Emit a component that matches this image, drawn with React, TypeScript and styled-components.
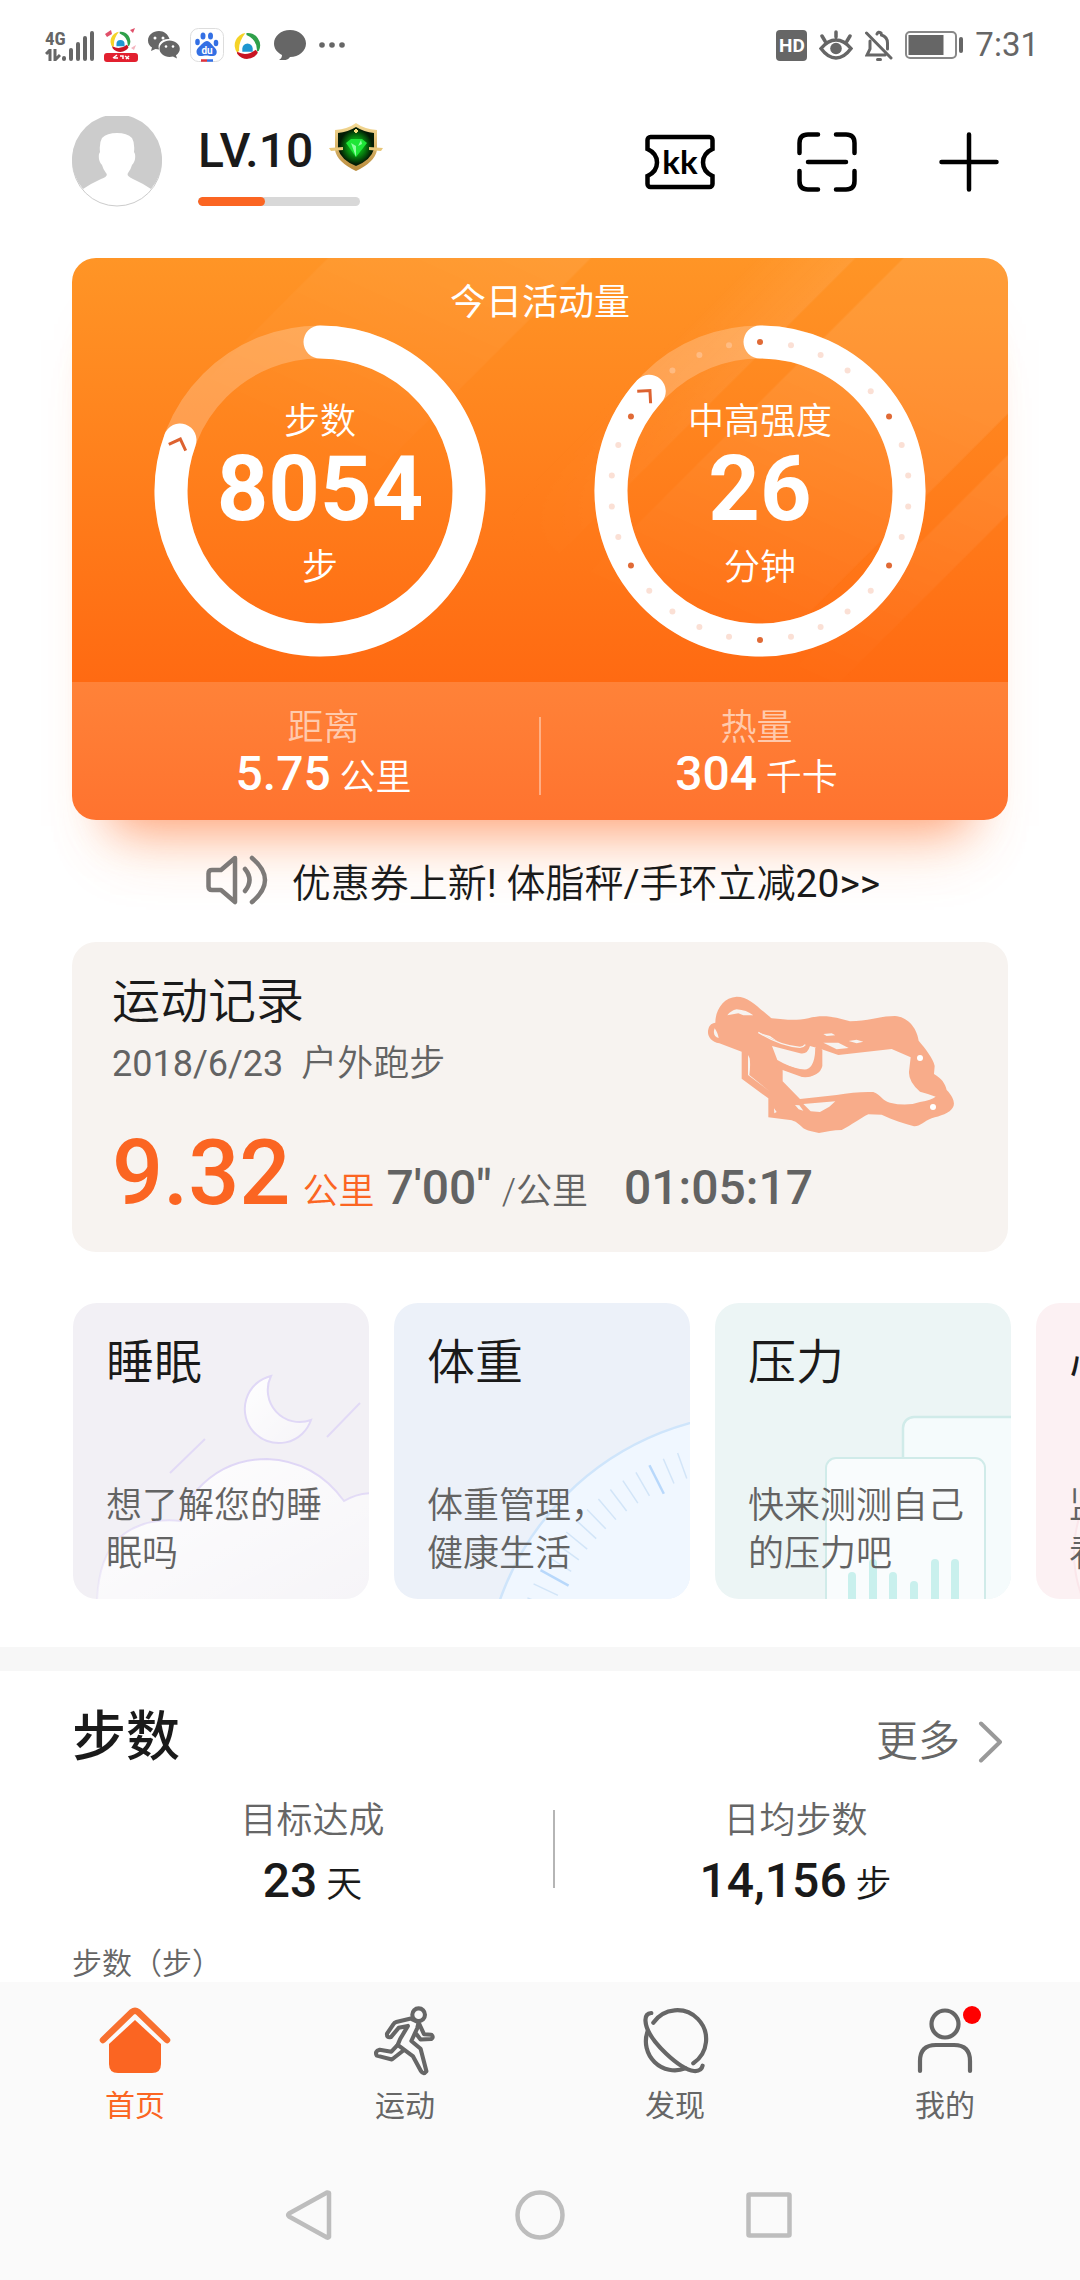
import React from "react";
import styled, { createGlobalStyle } from "styled-components";

const GlobalStyle = createGlobalStyle`
  *, *::before, *::after { box-sizing: border-box; }
  body {
    margin: 0;
    background: #fff;
    color: #1a1a1a;
    font-family: Roboto, "Noto Sans CJK SC", sans-serif;
    font-weight: 350;
  }
  h1, h2, h3, p, dl, dt, dd, ul { margin: 0; padding: 0; font-weight: inherit; }
  ul { list-style: none; }
  button { border: 0; padding: 0; background: none; font: inherit; color: inherit; cursor: pointer; }
  a { color: inherit; text-decoration: none; }
  svg { display: block; }
`;

const Screen = styled.div`
  display: flex;
  flex-direction: column;
  height: 100vh;
`;

const Scroller = styled.main`
  flex: 1;
  min-height: 0;
  overflow-x: hidden;
  overflow-y: auto;
  scrollbar-width: none;
`;

const Latin = styled.span`
  font-weight: 400;
`;

/* ---------- status bar ---------- */

const StatusBar = styled.div`
  display: flex;
  justify-content: space-between;
  align-items: center;
  flex: none;
  height: 90px;
  padding: 0 41px 0 45px;
  color: #666;
`;

const StatusGroup = styled.div<{ $gap: number }>`
  display: flex;
  align-items: center;
  gap: ${(p) => p.$gap}px;
`;

const Signal = styled.div`
  display: flex;
  align-items: flex-end;
`;

const Network = styled.span`
  font-size: 19px;
  line-height: 16px;
  font-weight: 700;
  font-family: "Roboto Condensed", "Liberation Sans Narrow", Roboto, sans-serif;
`;

const NetworkColumn = styled.div`
  display: flex;
  flex-direction: column;
  gap: 2px;
  width: 17px;
`;

const HdBadge = styled.span`
  width: 31px;
  height: 31px;
  border-radius: 4px;
  background: #666;
  color: #fff;
  font-size: 19px;
  font-weight: 700;
  line-height: 32px;
  text-align: center;
`;

const Clock = styled.time`
  font-size: 33px;
  line-height: 40px;
  font-weight: 400;
`;

/* ---------- header ---------- */

const Header = styled.header`
  display: flex;
  align-items: center;
  justify-content: space-between;
  padding: 26px 81px 51px 72px;
`;

const Profile = styled.div`
  display: flex;
  align-items: center;
  gap: 36px;
`;

const Level = styled.div`
  padding-top: 5px;
`;

const LevelRow = styled.div`
  display: flex;
  align-items: center;
  gap: 16px;
  font-size: 48px;
  line-height: 56px;
  font-weight: 500;

  svg { margin-bottom: 8px; }
`;

const LevelTrack = styled.div`
  width: 162px;
  height: 9px;
  margin-top: 18px;
  border-radius: 5px;
  background: #d8d8d8;
  overflow: hidden;
`;

const LevelFill = styled.div`
  height: 100%;
  border-radius: 5px;
  background: #fb6522;
`;

const HeaderActions = styled.div`
  display: flex;
  align-items: center;
  gap: 82px;
  color: #000;
`;

/* ---------- activity card ---------- */

const Gutter = styled.div`
  padding: 0 72px;
`;

const ActivityCard = styled.section`
  border-radius: 24px;
  color: #fff;
  box-shadow: 0 44px 46px -38px rgba(255, 104, 40, 0.55), 0 66px 60px -44px rgba(255, 150, 80, 0.3);
`;

const ActivityTop = styled.div`
  position: relative;
  padding: 23px 28px 25px;
  border-radius: 24px 24px 0 0;
  background: linear-gradient(#ff9526, #ff6a12);

  &::before {
    content: "";
    position: absolute;
    inset: 0;
    border-radius: inherit;
    background: linear-gradient(
      135deg,
      transparent 180px,
      rgba(255, 255, 255, 0.08) 182px 366px,
      transparent 368px 480px,
      rgba(255, 255, 255, 0.08) 553px,
      transparent 555px 587px,
      rgba(255, 255, 255, 0.09) 589px 771px,
      transparent 773px 800px,
      rgba(255, 255, 255, 0.09) 802px 842px,
      transparent 844px
    );
    mask-image: linear-gradient(to bottom left, #000 20%, transparent 62%);
  }
`;

const ActivityTitle = styled.h1`
  position: relative;
  font-size: 36px;
  line-height: 44px;
  font-weight: 400;
  text-align: center;
`;

const Rings = styled.div`
  position: relative;
  display: grid;
  grid-template-columns: 1fr 1fr;
  justify-items: center;
`;

const RingBox = styled.div`
  display: grid;
  place-items: center;

  > * { grid-area: 1 / 1; }
`;

const RingText = styled.div`
  display: flex;
  flex-direction: column;
  align-items: center;
  padding-top: 8px;
  font-size: 36px;
  line-height: 44px;
`;

const RingNumber = styled.strong`
  margin-bottom: 10px;
  font-size: 90px;
  line-height: 92px;
  font-weight: 700;
`;

const ActivityBottom = styled.dl`
  display: flex;
  align-items: center;
  padding: 24px 36px 14px;
  border-radius: 0 0 24px 24px;
  background: linear-gradient(#ff8238, #ff732f);
`;

const Stat = styled.div`
  flex: 1;
  text-align: center;
`;

const Rule = styled.div<{ $color: string }>`
  width: 2px;
  height: 78px;
  background: ${(p) => p.$color};
`;

const TotalLabel = styled.dt`
  font-size: 36px;
  line-height: 44px;
  color: rgba(255, 255, 255, 0.6);
`;

const TotalValue = styled.dd`
  font-size: 36px;
  line-height: 56px;
`;

const Figure = styled.strong`
  font-size: 48px;
  line-height: 0;
  font-weight: 500;
`;

/* ---------- notice ---------- */

const Notice = styled.a`
  position: relative;
  display: flex;
  align-items: center;
  justify-content: center;
  gap: 24px;
  height: 122px;
  padding: 0 0 2px 6px;
  font-size: 39px;
`;

/* ---------- workout record ---------- */

const Record = styled.section`
  position: relative;
  padding: 30px 40px 32px;
  border-radius: 24px;
  background: #f7f3f0;
  color: #636363;
`;

const RecordTitle = styled.h2`
  font-size: 48px;
  line-height: 60px;
  color: #1a1a1a;
`;

const RecordMeta = styled.p`
  margin-top: 8px;
  font-size: 36px;
  line-height: 48px;
  white-space: pre;
`;

const RecordStats = styled.p`
  display: flex;
  align-items: baseline;
  margin-top: 40px;
  font-size: 36px;
  line-height: 40px;
  white-space: nowrap;
`;

const Distance = styled.strong`
  margin-right: 12px;
  font-size: 90px;
  line-height: 92px;
  font-weight: 500;
  color: #fb6522;
`;

const DistanceUnit = styled.span`
  margin-right: 12px;
  color: #fb6522;
`;

const Pace = styled(Figure)`
  margin-right: 10px;
`;

const Duration = styled(Figure)`
  margin-left: 36px;
`;

const Route = styled.svg`
  position: absolute;
  top: 38px;
  right: 38px;
`;

/* ---------- health tiles ---------- */

const Tiles = styled.ul`
  display: flex;
  gap: 25px;
  margin: 51px 0 48px;
  padding-left: 73px;
  overflow: hidden;
`;

const Tile = styled.li<{ $bg: string }>`
  position: relative;
  flex: none;
  width: 296px;
  height: 296px;
  padding: 30px 33px;
  border-radius: 24px;
  background: ${(p) => p.$bg};
  overflow: hidden;
`;

const TileArt = styled.svg`
  position: absolute;
  inset: 0;
`;

const TileTitle = styled.h3`
  position: relative;
  font-size: 48px;
  line-height: 60px;
`;

const TileText = styled.p`
  position: relative;
  margin-top: 89px;
  font-size: 36px;
  line-height: 48px;
  color: #636363;
  white-space: pre-line;
`;

/* ---------- steps ---------- */

const Steps = styled.section`
  padding: 31px 0 0;
  border-top: 24px solid #f7f7f7;
`;

const StepsHead = styled.div`
  display: flex;
  align-items: center;
  justify-content: space-between;
  padding: 0 76px 0 72px;
`;

const StepsTitle = styled.h2`
  font-size: 54px;
  line-height: 72px;
  font-weight: 500;
`;

const More = styled.a`
  display: flex;
  align-items: center;
  gap: 18px;
  margin-top: 8px;
  font-size: 42px;
  line-height: 56px;
  color: #666;
`;

const StepsStats = styled.dl`
  display: flex;
  align-items: center;
  margin: 21px 44px 0 72px;
`;

const StepsLabel = styled.dt`
  font-size: 36px;
  line-height: 52px;
  color: #666;
`;

const StepsValue = styled.dd`
  margin-top: 20px;
  font-size: 36px;
  line-height: 36px;
`;

const ChartCaption = styled.p`
  margin-top: 43px;
  padding-left: 72px;
  font-size: 30px;
  line-height: 36px;
  color: #666;
`;

/* ---------- bottom navigation ---------- */

const Bottom = styled.footer`
  flex: none;
  background: #fafafa;
`;

const Tabs = styled.nav`
  display: grid;
  grid-template-columns: repeat(4, 1fr);
  height: 168px;
  padding-top: 22px;
`;

const Tab = styled.a<{ $active?: boolean }>`
  display: flex;
  flex-direction: column;
  align-items: center;
  gap: 10px;
  font-size: 30px;
  line-height: 36px;
  font-weight: 400;
  color: ${(p) => (p.$active ? "#fb6522" : "#666")};
`;

const TabIcon = styled.span`
  position: relative;
`;

const Dot = styled.span`
  position: absolute;
  top: 2px;
  right: 0;
  width: 18px;
  height: 18px;
  border-radius: 50%;
  background: #f00;
`;

const SystemBar = styled.div`
  display: flex;
  align-items: center;
  justify-content: center;
  gap: 180px;
  height: 130px;
`;

/* ---------- rings ---------- */

const RING = 332;
const RADIUS = 149;

const at = (deg: number, r = RADIUS) => {
  const a = ((deg - 90) * Math.PI) / 180;
  return [RING / 2 + r * Math.cos(a), RING / 2 + r * Math.sin(a)];
};

function Ring({ degrees, dotted }: { degrees: number; dotted?: boolean }) {
  const [x, y] = at(degrees);
  const [sx, sy] = at(0);
  const dots = dotted ? Array.from({ length: 30 }, (_, i) => i).filter((i) => i * 12 !== degrees) : [];
  return (
    <svg width={RING} height={RING} fill="none" aria-hidden="true">
      <circle cx={RING / 2} cy={RING / 2} r={RADIUS} stroke="#fff" strokeOpacity=".22" strokeWidth="33" />
      <path
        d={`M${sx} ${sy}A${RADIUS} ${RADIUS} 0 1 1 ${x} ${y}`}
        stroke="#fff"
        strokeWidth="33"
        strokeLinecap="round"
      />
      {dots.map((i) => {
        const [cx, cy] = at(i * 12);
        const major = i % 5 === 0;
        const empty = i * 12 > degrees;
        return (
          <circle
            key={i}
            cx={cx}
            cy={cy}
            r="3"
            fill={major ? "#e06a36" : empty ? "#ffc9a0" : "#fbe0d5"}
            fillOpacity={empty ? 0.6 : 1}
          />
        );
      })}
      <path d="M-9 8L0 -1L9 8" transform={`translate(${x} ${y}) rotate(${degrees + 90})`} stroke="#dd6230" strokeWidth="3" />
    </svg>
  );
}

/* ---------- drawings ---------- */

const SwirlLogo = ({ size, x, y }: { size: number; x?: number; y?: number }) => (
  <svg x={x} y={y} width={size} height={size} viewBox="0 0 26 26" fill="none">
    <path d="M3 20A12 12 0 0 1 11 1Q4 10 5 18Z" fill="#f5d327" />
    <path d="M12 1A12 12 0 0 1 24 18L22 19Q23 8 12 3Z" fill="#2fa04a" />
    <path d="M3 19Q12 24 21 17L23 20A12 12 0 0 1 3 21Z" fill="#c81422" />
    <path d="M8 19V16A5 5 0 1 1 18 16V19Z" fill="#1e96d0" />
  </svg>
);

function SignalIcon() {
  return (
    <svg width="32" height="31" fill="none" stroke="#666" strokeWidth="4" strokeLinecap="round">
      <path d="M2 28v1M9 20v9M16 14v15M23 8v21M30 3v26" />
    </svg>
  );
}

function PromoIcon() {
  return (
    <svg width="34" height="34" viewBox="0 0 34 34">
      <path d="M1 6l6-4 1 4-5 3zM26 2l5-2-2 5z" fill="#e0506a" />
      <path d="M27 20l5-3-2 5z" fill="#f3b4be" />
      <SwirlLogo size={21} x={6} y={3} />
      <rect y="25" width="34" height="9" rx="3" fill="#e2202f" />
      <path d="M9 30l4-3M10 30h4M16 28h3v3M21 28l4 3M25 28l-3 3" stroke="#fff" strokeWidth="1.5" fill="none" />
    </svg>
  );
}

function WechatIcon() {
  return (
    <svg width="32" height="28" viewBox="0 0 32 28" fill="#666">
      <path d="M11 0C5 0 0 4 0 9.500c0 3 1.500 5.500 4 7L3 20l4.500-2 3.500.5C9 12 14 7.500 21.500 8 20 3 16 0 11 0z" />
      <path d="M21.500 9.500c-5.500 0-10 3.700-10 8.300s4.500 8.200 10 8.200l3.500-.5 4 2-1-3.300c2.400-1.500 3.800-3.800 3.800-6.400 0-4.600-4.800-8.300-10.300-8.300z" />
      <g fill="#fff">
        <circle cx="7" cy="7" r="1.500" /><circle cx="15" cy="7" r="1.500" />
        <circle cx="18" cy="15.500" r="1.300" /><circle cx="25" cy="15.500" r="1.300" />
      </g>
    </svg>
  );
}

function PawIcon() {
  return (
    <svg width="34" height="34" viewBox="0 0 34 34">
      <rect x=".5" y=".5" width="33" height="33" rx="8" fill="#fff" stroke="#ddd" />
      <g fill="#3470e4">
        <ellipse cx="13" cy="8" rx="2.500" ry="3.500" /><ellipse cx="20.500" cy="8" rx="2.500" ry="3.500" />
        <ellipse cx="7.500" cy="14" rx="2.300" ry="3.200" /><ellipse cx="26" cy="15" rx="2.300" ry="3.200" />
        <path d="M17 13c3 0 5 4 8 7s2 8-2 8-4-.6-6.500-.6S13 28 10 28s-5-5-2-8 6-7 9-7z" />
      </g>
      <text x="17" y="26" fontSize="10" fontWeight="700" fontFamily="Roboto" fill="#fff" textAnchor="middle">du</text>
      <path d="M11 32.500h6" stroke="#e0323c" strokeWidth="2.500" />
      <path d="M17 32.500h6" stroke="#3470e4" strokeWidth="2.500" />
    </svg>
  );
}

function BubbleIcon() {
  return (
    <svg width="32" height="30" viewBox="0 0 32 30" fill="#666">
      <path d="M16 0c9 0 16 6 16 13.500S25 27 16 27c-2 3-6 4-11 3 2-1 3-3 3-5C3 22.500 0 18.500 0 13.500 0 6 7 0 16 0z" />
    </svg>
  );
}

function MoreDots() {
  return (
    <svg width="26" height="6" fill="#666">
      <circle cx="3" cy="3" r="2.800" /><circle cx="13" cy="3" r="2.800" /><circle cx="23" cy="3" r="2.800" />
    </svg>
  );
}

function EyeIcon() {
  return (
    <svg width="34" height="30" viewBox="0 0 34 30" fill="none" stroke="#666" strokeWidth="3.500" strokeLinecap="round">
      <path d="M2 18.500Q9 10 17 10t15 8.500Q25 28 17 28T2 18.500zM17 2v5M3 6l3 5M31 6L28 11" />
      <circle cx="17" cy="18.500" r="5.800" fill="#666" stroke="none" />
    </svg>
  );
}

function BellOffIcon() {
  return (
    <svg width="28" height="31" viewBox="0 0 28 31" fill="none" stroke="#666" strokeWidth="3" strokeLinecap="round">
      <path d="M1.500 3L26 28M5 11v8l-3 6h18M12 4q1-3 4-1l.5 2q6 2 6 8v6" />
      <path d="M12.500 29.500h3" />
    </svg>
  );
}

function BatteryIcon() {
  return (
    <svg width="58" height="28" viewBox="0 0 58 28" fill="none">
      <rect x="1" y="1" width="50" height="26" rx="4" stroke="#888" strokeWidth="2" />
      <rect x="3.500" y="4" width="35" height="20" fill="#666" />
      <rect x="54" y="6" width="4" height="16" rx="2" fill="#666" />
    </svg>
  );
}

function AvatarArt() {
  return (
    <svg width="90" height="91" viewBox="0 0 90 91" role="img" aria-label="头像">
      <circle cx="45" cy="45.500" r="44.500" fill="#fff" stroke="#ccc" />
      <path
        fill="#ccc"
        d="M11 73A45 45 0 1 1 79 73Q70 67 61 63Q54 60 56 57Q59 53 60 49Q64 45 63 38L62 36Q63 27 60 22Q55 17 45 17T30 22Q27 27 28 36L27 38Q26 45 30 49Q31 53 34 57Q37 60 29 63Q20 67 11 73Z"
      />
    </svg>
  );
}

function ShieldArt() {
  return (
    <svg width="54" height="48" viewBox="0 0 54 48" aria-hidden="true">
      <defs>
        <radialGradient id="glow">
          <stop offset="0" stopColor="#16e02a" />
          <stop offset=".5" stopColor="#06840f" />
          <stop offset=".9" stopColor="#031c04" />
        </radialGradient>
        <linearGradient id="gold" x2="0" y2="1">
          <stop stopColor="#f6dc98" />
          <stop offset="1" stopColor="#b98a3a" />
        </linearGradient>
      </defs>
      <path d="M27 0Q35 6 48 7V27Q46 39 27 48Q8 39 6 27V7Q19 6 27 0Z" fill="url(#gold)" />
      <path d="M27 4Q35 9 45 10V26Q42 37 27 43Q12 37 9 26V10Q19 9 27 4Z" fill="url(#glow)" />
      <path d="M0 25l14-1v3l-12 1zM54 25l-14-1v3l12 1z" fill="#e8c77a" />
      <path d="M17 20l5-4h11l5 4-11 14z" fill="#1ee637" />
      <path d="M22 20l5 3v11zM32 17l1 4-4 2z" fill="#8dffa0" />
      <path d="M25 8h4M27 6v4" stroke="#f2dd7c" strokeWidth="2" />
    </svg>
  );
}

function TicketIcon() {
  return (
    <svg width="70" height="56" viewBox="0 0 70 56" fill="none" stroke="#000" strokeWidth="4.500">
      <path d="M2.500 15V6a3 3 0 0 1 3-3H64.500a3 3 0 0 1 3 3V15C61 18 58 23 58 28.500S61 39 67.500 42V50a3 3 0 0 1-3 3H5.500a3 3 0 0 1-3-3V42C9 39 12 34 12 28.500S9 18 2.500 15Z" />
      <text x="35" y="40" fontSize="33" fontWeight="700" fontFamily="Lato, sans-serif" textAnchor="middle" fill="#000" stroke="none">kk</text>
    </svg>
  );
}

function ScanIcon() {
  return (
    <svg width="60" height="60" viewBox="0 0 60 60" fill="none" stroke="#000" strokeWidth="4.500" strokeLinecap="round">
      <path d="M2.500 21V11Q2.500 2.500 11 2.500H21M39 2.500H49Q57.500 2.500 57.500 11V21M57.500 39V49Q57.500 57.500 49 57.500H39M21 57.500H11Q2.500 57.500 2.500 49V39M11 30H49" />
    </svg>
  );
}

function PlusIcon() {
  return (
    <svg width="60" height="60" viewBox="0 0 60 60" fill="none" stroke="#000" strokeWidth="4.500" strokeLinecap="round">
      <path d="M30 2.500V57.500M2.500 30H57.500" />
    </svg>
  );
}

function SpeakerIcon() {
  return (
    <svg width="62" height="50" viewBox="0 0 62 50" fill="none" stroke="#7d7a78" strokeWidth="4.500" strokeLinecap="round" strokeLinejoin="round">
      <path d="M29 3L15 15H6Q2.500 15 2.500 18.500V31.500Q2.500 35 6 35H15L29 47Z" />
      <path d="M39 14Q48 25 39 36M46 3Q72 25 46 47" />
    </svg>
  );
}

function RouteArt() {
  return (
    <Route width="280" height="170" viewBox="0 0 840 510" aria-hidden="true">
      <path
        fill="#f8ac8a"
        fillRule="evenodd"
        d="M76 128C76 90 100 52 140 50C180 50 205 85 245 115C290 120 320 122 355 115C400 102 440 112 480 124C530 124 570 108 615 108C650 110 680 140 686 182C705 205 730 235 734 258L732 282C755 295 765 310 770 330C790 350 796 370 789 382C780 400 750 408 725 415C700 425 690 440 672 439C640 430 610 420 575 404L535 403C510 415 485 435 455 450C430 450 410 455 387 459C370 455 350 452 340 445C325 430 315 422 300 420L235 412V355L155 296V215L88 190C62 186 50 165 55 148C58 132 68 130 76 128Z
          M74 145C68 160 74 172 86 174C84 162 80 154 74 145Z
          M112 106L145 100L160 106L190 106Q170 90 140 88Q122 92 112 106Z
          M174 225V285L240 335L178 285Q182 255 179 235Z
          M246 198L262 240L280 250Q320 270 350 268Q376 258 376 200L397 210V258Q390 290 340 290L278 268V304L330 357L440 345Q500 334 550 336C575 345 575 362 600 368Q650 380 690 366Q725 360 737 350Q710 340 690 335Q655 305 657 275L662 232L605 207L445 225L395 208L360 198Q352 225 330 220Z
          M400 188L445 188L476 204L440 208Z
          M476 183L500 179L520 185L500 190Z
          M400 162L425 160L436 166L410 168Z
          M340 372L436 364L418 380L390 396L362 394Z
          M315 375L328 376L340 392L326 388Z
          M252 385L260 396L253 400Z"
      />
      <path d="M386 196V250Q375 286 338 282L262 255" fill="none" stroke="#f8ac8a" strokeWidth="18" />
      <path d="M205 157Q270 198 330 202Q340 202 346 194" fill="none" stroke="#f7f3f0" strokeWidth="4" />
      <path d="M206 158L240 168L262 184Z" fill="#f7f3f0" />
      <circle cx="690" cy="234" r="9" fill="#fff" />
      <circle cx="729" cy="381" r="9" fill="#fff" />
    </Route>
  );
}

function SleepArt() {
  return (
    <TileArt width="296" height="296" fill="none" aria-hidden="true">
      <defs>
        <linearGradient id="cloud" x2="1" y2="1">
          <stop stopColor="#fff" stopOpacity=".95" />
          <stop offset="1" stopColor="#fff" stopOpacity=".3" />
        </linearGradient>
        <linearGradient id="cloudEdge" x2="0" y2="1">
          <stop stopColor="#dfd6f6" />
          <stop offset="1" stopColor="#dfd6f6" stopOpacity=".3" />
        </linearGradient>
      </defs>
      <path d="M198 73A34 34 0 1 0 238 117A32 32 0 0 1 198 73Z" fill="url(#cloud)" stroke="#e0d8f6" strokeWidth="2" />
      <path
        d="M24 300Q25 255 46 235Q70 214 108 218Q112 203 124 187Q152 156 194 156Q242 158 271 198Q284 190 300 190V300Z"
        fill="url(#cloud)"
        stroke="url(#cloudEdge)"
        strokeWidth="2"
      />
      <path d="M97 170L132 136M254 134L287 100" stroke="#e2daf6" strokeWidth="2" />
    </TileArt>
  );
}

function WeightArt() {
  const ticks = Array.from({ length: 17 }, (_, i) => i - 3);
  return (
    <TileArt width="296" height="296" fill="none" aria-hidden="true">
      <circle cx="370" cy="390" r="280" fill="#f0f7ff" stroke="#cfe5fb" strokeWidth="2.500" />
      {ticks.map((i) => {
        const a = ((28.8 + 3.45 * i) * Math.PI) / 180;
        const major = i % 10 === 0;
        const inner = major ? 223 : 228;
        return (
          <line
            key={i}
            x1={370 - 255 * Math.cos(a)}
            y1={390 - 255 * Math.sin(a)}
            x2={370 - inner * Math.cos(a)}
            y2={390 - inner * Math.sin(a)}
            stroke={major ? "#b8d8fb" : "#d2e5f8"}
            strokeWidth={major ? 2.5 : 1.5}
          />
        );
      })}
    </TileArt>
  );
}

function StressArt() {
  const bars = [[137, 269], [158, 256], [178, 269], [199, 278], [220, 256], [240, 256]];
  return (
    <TileArt width="296" height="296" fill="none" aria-hidden="true">
      <rect x="188" y="114" width="140" height="200" rx="11" fill="#f5fbfc" stroke="#d0ebe9" strokeWidth="2.500" />
      <rect x="111" y="155" width="159" height="170" rx="10" fill="#f9fcfd" stroke="#d0ebe9" strokeWidth="2" />
      {bars.map(([x, y]) => (
        <rect key={x} x={x - 4} y={y} width="8" height="60" rx="4" fill="#c9f0ed" />
      ))}
    </TileArt>
  );
}

function HeartArt() {
  return (
    <TileArt width="296" height="296" fill="none" aria-hidden="true">
      <circle cx="160" cy="250" r="122" fill="#fdf5f6" stroke="#fae6ea" strokeWidth="2" />
    </TileArt>
  );
}

function HomeIcon() {
  return (
    <svg width="76" height="74" viewBox="0 0 76 74" fill="none">
      <path d="M6 36L35 8Q38 5.500 41 8L70 36" stroke="#f8702f" strokeWidth="6.500" strokeLinecap="round" />
      <path d="M38 16L64 40V60Q64 69 55 69H21Q12 69 12 60V40Z" fill="#fb6522" />
    </svg>
  );
}

function RunIcon() {
  return (
    <svg width="70" height="74" viewBox="0 0 70 76" fill="none" stroke="#666" strokeWidth="4.200" strokeLinejoin="round" strokeLinecap="round">
      <circle cx="49" cy="11" r="6.500" />
      <path d="M47 18L41 15L26 18.500Q24 19 23 21L16.500 30.500Q16 35 20.500 34L28.500 24.500L38 22.500L30 36L27.500 42L21 49L9 47Q3.500 48.500 6 53L21.500 57L33 48" />
      <path d="M27.500 42L43 53.500L51.500 69Q54 73 57 69L51 46L41.500 38L47.500 25L49 19L54.500 31L62 31.500Q65 34 62 36L51 36.500L46 30" />
    </svg>
  );
}

function PlanetIcon() {
  return (
    <svg width="70" height="74" viewBox="1 -3 70 74" fill="none" stroke="#666" strokeWidth="4.200" strokeLinecap="round">
      <path d="M14.300 15.700A29 29 0 1 1 54.300 56.300M8.500 24.700A29 29 0 0 0 46.400 61.300" />
      <path d="M12.300 6Q6 6.500 6.500 14C7 24 16 36 27 46.500C36 55 46 63 55 64Q62.500 64.500 63.600 58.700" />
    </svg>
  );
}

function PersonIcon() {
  return (
    <svg width="72" height="74" viewBox="-6 0 72 74" fill="none" stroke="#666" strokeWidth="4.200" strokeLinecap="round">
      <circle cx="30" cy="20" r="13.500" />
      <path d="M5 67V57Q5 41 21 41H39Q55 41 55 57V67" />
    </svg>
  );
}

const softKey = { fill: "none", stroke: "#bdbdbd", strokeWidth: 4.5, strokeLinejoin: "round" as const };

const tiles = [
  { title: "睡眠", text: "想了解您的睡眠吗", bg: "#f2f0f5", art: <SleepArt /> },
  { title: "体重", text: "体重管理，\n健康生活", bg: "#ecf1f9", art: <WeightArt /> },
  { title: "压力", text: "快来测测自己的压力吧", bg: "#ecf5f5", art: <StressArt /> },
  { title: "心率", text: "监测心率\n看健康", bg: "#fcf1f3", art: <HeartArt /> },
];

export default function App() {
  return (
    <Screen>
      <GlobalStyle />
      <StatusBar>
        <StatusGroup $gap={10}>
          <Signal>
            <NetworkColumn>
              <Network>4G</Network>
              <svg width="16" height="12" fill="none" stroke="#666" strokeWidth="3">
                <path d="M1 5l4-4v11M10 0v11l5-5" />
              </svg>
            </NetworkColumn>
            <SignalIcon />
          </Signal>
          <PromoIcon />
          <WechatIcon />
          <PawIcon />
          <StatusGroup $gap={13}>
            <SwirlLogo size={27} />
            <BubbleIcon />
            <MoreDots />
          </StatusGroup>
        </StatusGroup>
        <StatusGroup $gap={12}>
          <HdBadge>HD</HdBadge>
          <EyeIcon />
          <BellOffIcon />
          <BatteryIcon />
          <Clock>7:31</Clock>
        </StatusGroup>
      </StatusBar>

      <Scroller>
        <Header>
          <Profile>
            <AvatarArt />
            <Level>
              <LevelRow>
                LV.10
                <ShieldArt />
              </LevelRow>
              <LevelTrack>
                <LevelFill style={{ width: `${(67 / 162) * 100}%` }} />
              </LevelTrack>
            </Level>
          </Profile>
          <HeaderActions>
            <button aria-label="卡券"><TicketIcon /></button>
            <button aria-label="扫一扫"><ScanIcon /></button>
            <button aria-label="添加"><PlusIcon /></button>
          </HeaderActions>
        </Header>

        <Gutter>
          <ActivityCard>
            <ActivityTop>
              <ActivityTitle>今日活动量</ActivityTitle>
              <Rings>
                <RingBox>
                  <Ring degrees={290} />
                  <RingText>
                    <span>步数</span>
                    <RingNumber>8054</RingNumber>
                    <span>步</span>
                  </RingText>
                </RingBox>
                <RingBox>
                  <Ring degrees={312} dotted />
                  <RingText>
                    <span>中高强度</span>
                    <RingNumber>26</RingNumber>
                    <span>分钟</span>
                  </RingText>
                </RingBox>
              </Rings>
            </ActivityTop>
            <ActivityBottom>
              <Stat>
                <TotalLabel>距离</TotalLabel>
                <TotalValue><Figure>5.75</Figure> 公里</TotalValue>
              </Stat>
              <Rule $color="rgba(255, 255, 255, 0.4)" />
              <Stat>
                <TotalLabel>热量</TotalLabel>
                <TotalValue><Figure>304</Figure> 千卡</TotalValue>
              </Stat>
            </ActivityBottom>
          </ActivityCard>

          <Notice href="#offers">
            <SpeakerIcon />
            <span>
              优惠券上新<Latin>! </Latin>体脂秤<Latin>/</Latin>手环立减<Latin>20&gt;&gt;</Latin>
            </span>
          </Notice>

          <Record>
            <RecordTitle>运动记录</RecordTitle>
            <RecordMeta><Latin>2018/6/23  </Latin>户外跑步</RecordMeta>
            <RecordStats>
              <Distance>9.32</Distance>
              <DistanceUnit>公里</DistanceUnit>
              <Pace>7'00"</Pace>
              <span>/公里</span>
              <Duration>01:05:17</Duration>
            </RecordStats>
            <RouteArt />
          </Record>
        </Gutter>

        <Tiles>
          {tiles.map((t) => (
            <Tile key={t.title} $bg={t.bg}>
              {t.art}
              <TileTitle>{t.title}</TileTitle>
              <TileText>{t.text}</TileText>
            </Tile>
          ))}
        </Tiles>

        <Steps>
          <StepsHead>
            <StepsTitle>步数</StepsTitle>
            <More href="#steps">
              更多
              <svg width="26" height="42" viewBox="0 0 26 42" fill="none" stroke="#999" strokeWidth="4" strokeLinecap="round" strokeLinejoin="round">
                <path d="M3 2.500L22 21L3 39.500" />
              </svg>
            </More>
          </StepsHead>
          <StepsStats>
            <Stat>
              <StepsLabel>目标达成</StepsLabel>
              <StepsValue><Figure>23</Figure> 天</StepsValue>
            </Stat>
            <Rule $color="#b5b5b5" />
            <Stat>
              <StepsLabel>日均步数</StepsLabel>
              <StepsValue><Figure>14,156</Figure> 步</StepsValue>
            </Stat>
          </StepsStats>
          <ChartCaption>步数（步）</ChartCaption>
        </Steps>
      </Scroller>

      <Bottom>
        <Tabs>
          <Tab href="#home" $active>
            <TabIcon><HomeIcon /></TabIcon>
            首页
          </Tab>
          <Tab href="#sport">
            <TabIcon><RunIcon /></TabIcon>
            运动
          </Tab>
          <Tab href="#discover">
            <TabIcon><PlanetIcon /></TabIcon>
            发现
          </Tab>
          <Tab href="#me">
            <TabIcon><PersonIcon /><Dot /></TabIcon>
            我的
          </Tab>
        </Tabs>
        <SystemBar>
          <button aria-label="返回">
            <svg width="50" height="50" {...softKey}><path d="M44 3V47Q43 48 42 47.500L4 26.500Q2.500 25 4 23.500L42 2.500Z" /></svg>
          </button>
          <button aria-label="主屏幕">
            <svg width="50" height="50" {...softKey}><circle cx="25" cy="25" r="22.500" /></svg>
          </button>
          <button aria-label="最近任务">
            <svg width="50" height="50" {...softKey}><rect x="3.500" y="4.500" width="41" height="41" rx="1" /></svg>
          </button>
        </SystemBar>
      </Bottom>
    </Screen>
  );
}
